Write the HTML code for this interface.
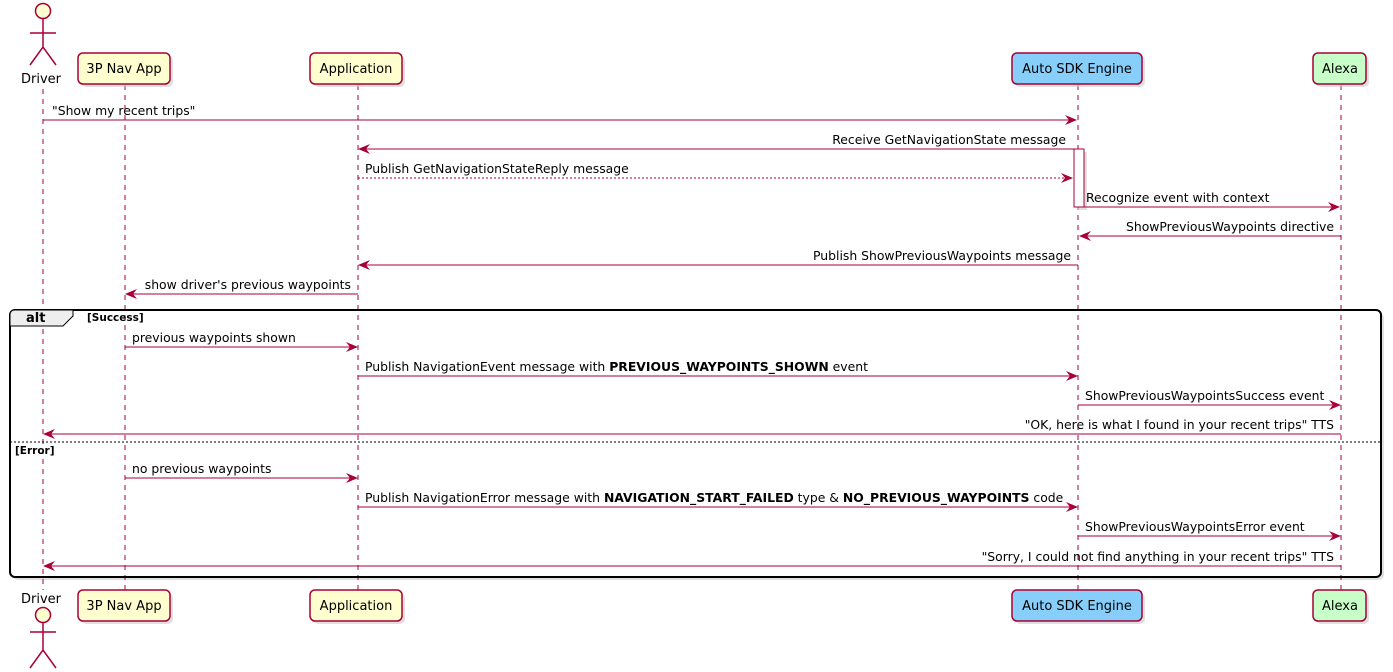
<!DOCTYPE html>
<html><head><meta charset="utf-8"><style>
html,body{margin:0;padding:0;background:#fff;}
svg{display:block;font-family:"DejaVu Sans","Liberation Sans",sans-serif;font-size:12.4px;}
.ll{stroke:#A80036;stroke-width:1;stroke-dasharray:5,5;}
.m{stroke:#A80036;stroke-width:1;}
.p{fill:#FEFECE;stroke:#A80036;stroke-width:1.5;}
.pt{font-size:13px;}
</style></head><body>
<svg width="1393" height="672" viewBox="0 0 1393 672" xmlns="http://www.w3.org/2000/svg">
<defs>
<marker id="a" viewBox="0 0 12 10" refX="11" refY="5" markerWidth="12" markerHeight="10" markerUnits="userSpaceOnUse" orient="auto"><path d="M0,0 L12,5 L0,10 L4,5 Z" fill="#A80036"/></marker>
</defs>
<!-- alt frame background -->
<rect x="13" y="313" width="1371" height="267" rx="5" fill="#ccc" opacity="0.6"/>
<rect x="10" y="310" width="1371" height="267" rx="5" fill="#fff"/>
<!-- lifelines -->
<line class="ll" x1="43" y1="89" x2="43" y2="590"/>
<line class="ll" x1="125" y1="85" x2="125" y2="590"/>
<line class="ll" x1="358" y1="85" x2="358" y2="590"/>
<line class="ll" x1="1078" y1="85" x2="1078" y2="590"/>
<line class="ll" x1="1341" y1="85" x2="1341" y2="590"/>
<!-- top participants -->
<g class="pt">
<rect x="81" y="56" width="92" height="31" rx="5" fill="#ccc" opacity="0.6"/>
<rect class="p" x="78" y="53" width="92" height="31" rx="5"/>
<text x="124" y="73" text-anchor="middle">3P Nav App</text>
<rect x="313" y="56" width="92" height="31" rx="5" fill="#ccc" opacity="0.6"/>
<rect class="p" x="310" y="53" width="92" height="31" rx="5"/>
<text x="356" y="73" text-anchor="middle">Application</text>
<rect x="1015" y="56" width="130" height="31" rx="5" fill="#ccc" opacity="0.6"/>
<rect class="p" x="1012" y="53" width="130" height="31" rx="5" style="fill:#87CEFA"/>
<text x="1077" y="73" text-anchor="middle">Auto SDK Engine</text>
<rect x="1316" y="56" width="53" height="31" rx="5" fill="#ccc" opacity="0.6"/>
<rect class="p" x="1313" y="53" width="53" height="31" rx="5" style="fill:#C8FFC8"/>
<text x="1340" y="73" text-anchor="middle">Alexa</text>
</g>
<!-- bottom participants -->
<g class="pt">
<rect x="81" y="593" width="92" height="31" rx="5" fill="#ccc" opacity="0.6"/>
<rect class="p" x="78" y="590" width="92" height="31" rx="5"/>
<text x="124" y="610" text-anchor="middle">3P Nav App</text>
<rect x="313" y="593" width="92" height="31" rx="5" fill="#ccc" opacity="0.6"/>
<rect class="p" x="310" y="590" width="92" height="31" rx="5"/>
<text x="356" y="610" text-anchor="middle">Application</text>
<rect x="1015" y="593" width="130" height="31" rx="5" fill="#ccc" opacity="0.6"/>
<rect class="p" x="1012" y="590" width="130" height="31" rx="5" style="fill:#87CEFA"/>
<text x="1077" y="610" text-anchor="middle">Auto SDK Engine</text>
<rect x="1316" y="593" width="53" height="31" rx="5" fill="#ccc" opacity="0.6"/>
<rect class="p" x="1313" y="590" width="53" height="31" rx="5" style="fill:#C8FFC8"/>
<text x="1340" y="610" text-anchor="middle">Alexa</text>
</g>
<!-- actors -->
<g stroke="#A80036" stroke-width="1.5" fill="none">
<circle cx="43" cy="11" r="7.5" fill="#FEFECE"/>
<path d="M43,19 V47 M30,33 H56 M30,65 L43,47 L56,65"/>
<circle cx="43" cy="615" r="7.5" fill="#FEFECE"/>
<path d="M43,623 V650 M30,632 H56 M30,668 L43,650 L56,668"/>
</g>
<text class="pt" x="41" y="83" text-anchor="middle">Driver</text>
<text class="pt" x="41" y="603" text-anchor="middle">Driver</text>
<!-- activation -->
<rect x="1077" y="152" width="10" height="58" fill="#ccc" opacity="0.6"/>
<rect x="1074" y="149" width="10" height="58" fill="#fff" stroke="#A80036"/>
<!-- messages -->
<line class="m" x1="43" y1="120" x2="1076" y2="120" marker-end="url(#a)"/>
<text x="52" y="115">"Show my recent trips"</text>
<line class="m" x1="1074" y1="149" x2="359" y2="149" marker-end="url(#a)"/>
<text x="1066" y="144" text-anchor="end">Receive GetNavigationState message</text>
<line class="m" x1="358" y1="178" x2="1072" y2="178" stroke-dasharray="2,2" marker-end="url(#a)"/>
<text x="365" y="173">Publish GetNavigationStateReply message</text>
<line class="m" x1="1084" y1="207" x2="1339" y2="207" marker-end="url(#a)"/>
<text x="1086" y="202">Recognize event with context</text>
<line class="m" x1="1341" y1="236" x2="1080" y2="236" marker-end="url(#a)"/>
<text x="1334" y="231" text-anchor="end">ShowPreviousWaypoints directive</text>
<line class="m" x1="1078" y1="265" x2="359" y2="265" marker-end="url(#a)"/>
<text x="1071" y="260" text-anchor="end">Publish ShowPreviousWaypoints message</text>
<line class="m" x1="358" y1="294" x2="126" y2="294" marker-end="url(#a)"/>
<text x="351" y="289" text-anchor="end">show driver's previous waypoints</text>
<!-- alt frame -->
<rect x="10" y="310" width="1371" height="267" rx="5" fill="none" stroke="#000" stroke-width="2"/>
<path d="M10,326 H63 L73,316 V310 H15 Q10,310 10,315 Z" fill="#EEEEEE" stroke="#000" stroke-width="1"/>
<text x="26" y="322" font-weight="bold" font-size="13">alt</text>
<text x="87" y="321" font-weight="bold" font-size="10.5">[Success]</text>
<line x1="10" y1="442" x2="1381" y2="442" stroke="#000" stroke-dasharray="2,2"/>
<text x="15" y="454" font-weight="bold" font-size="10.5">[Error]</text>
<line class="m" x1="125" y1="347" x2="357" y2="347" marker-end="url(#a)"/>
<text x="132" y="342">previous waypoints shown</text>
<line class="m" x1="358" y1="376" x2="1077" y2="376" marker-end="url(#a)"/>
<text x="365" y="371">Publish NavigationEvent message with <tspan font-weight="bold">PREVIOUS_WAYPOINTS_SHOWN</tspan> event</text>
<line class="m" x1="1078" y1="405" x2="1340" y2="405" marker-end="url(#a)"/>
<text x="1085" y="400">ShowPreviousWaypointsSuccess event</text>
<line class="m" x1="1341" y1="434" x2="44" y2="434" marker-end="url(#a)"/>
<text x="1334" y="429" text-anchor="end">"OK, here is what I found in your recent trips" TTS</text>
<line class="m" x1="125" y1="478" x2="357" y2="478" marker-end="url(#a)"/>
<text x="132" y="473">no previous waypoints</text>
<line class="m" x1="358" y1="507" x2="1077" y2="507" marker-end="url(#a)"/>
<text x="365" y="502">Publish NavigationError message with <tspan font-weight="bold">NAVIGATION_START_FAILED</tspan> type &amp; <tspan font-weight="bold">NO_PREVIOUS_WAYPOINTS</tspan> code</text>
<line class="m" x1="1078" y1="536" x2="1340" y2="536" marker-end="url(#a)"/>
<text x="1085" y="531">ShowPreviousWaypointsError event</text>
<line class="m" x1="1341" y1="566" x2="44" y2="566" marker-end="url(#a)"/>
<text x="1334" y="561" text-anchor="end">"Sorry, I could not find anything in your recent trips" TTS</text>
</svg>
</body></html>
